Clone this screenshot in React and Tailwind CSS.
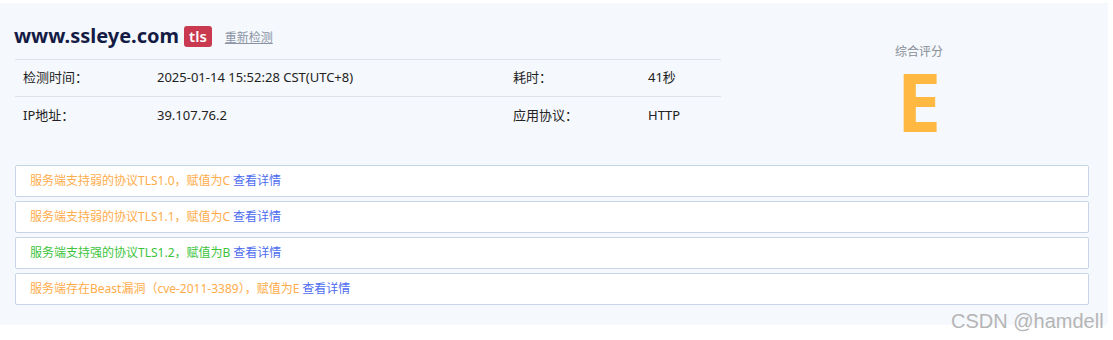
import React from 'react';

const rows = [
  [['检测时间：', '2025-01-14 15:52:28 CST(UTC+8)'], ['耗时：', '41秒']],
  [['IP地址：', '39.107.76.2'], ['应用协议：', 'HTTP']],
];

const alerts = [
  { text: '服务端支持弱的协议TLS1.0，赋值为C', color: 'text-[#ffac4a]' },
  { text: '服务端支持弱的协议TLS1.1，赋值为C', color: 'text-[#ffac4a]' },
  { text: '服务端支持强的协议TLS1.2，赋值为B', color: 'text-[#3cc43c]' },
  { text: '服务端存在Beast漏洞（cve-2011-3389），赋值为E', color: 'text-[#ffac4a]' },
];

export default function App() {
  return (
    <div className="relative w-[1113px] h-[340px] bg-white pt-[3px] font-['Noto_Sans','Noto_Sans_CJK_SC',sans-serif]">
      <div className="w-[1108px] h-[322px] bg-[#f5f8fc] rounded-br-[4px] px-[15px] pt-[18px]">
        <div className="flex">
          <div className="w-[706px]">
            <div className="flex items-center h-[30px]">
              <span className="text-[20px] font-bold text-[#141b45] leading-none -ml-[1px]">www.ssleye.com</span>
              <span className="ml-[5px] bg-[#c9394f] text-white text-[15px] font-semibold rounded-[3px] px-[5px] h-[21px] leading-[20px]">tls</span>
              <span className="ml-[13px] text-[12px] text-[#8a94a6] underline mt-[4px]">重新检测</span>
            </div>
            <div className="mt-[8px] border-t border-[#dde1e8]">
              {rows.map((r, i) => (
                <div key={i} className={`flex items-center h-[37px] text-[13px] text-[#222] ${i === 0 ? 'border-b border-[#dde1e8]' : ''}`}>
                  <span className="w-[142px] pl-[8px]">{r[0][0]}</span>
                  <span className="w-[356px]">{r[0][1]}</span>
                  <span className="w-[135px]">{r[1][0]}</span>
                  <span>{r[1][1]}</span>
                </div>
              ))}
            </div>
          </div>
          <div className="flex-1 flex flex-col items-center pl-[24px] pt-[25px]">
            <span className="text-[12px] text-[#8a8f99] leading-none">综合评分</span>
            <span className="text-[80px] font-bold text-[#ffb943] leading-[64px] mt-[11px]">E</span>
          </div>
        </div>
        <div className="mt-[31px] flex flex-col gap-[4px] w-[1074px]">
          {alerts.map((a, i) => (
            <div key={i} className="h-[32px] bg-white border border-[#c8d5e8] rounded-[2px] flex items-center pl-[14px] text-[12px]">
              <span className={a.color}>{a.text}</span>
              <span className="ml-[3px] text-[#4d6cf0]">查看详情</span>
            </div>
          ))}
        </div>
      </div>
      <span className="absolute left-[951px] top-[306px] text-[20px] text-[#b5b5b5] font-['Liberation_Sans',sans-serif]">CSDN @hamdell</span>
    </div>
  );
}
